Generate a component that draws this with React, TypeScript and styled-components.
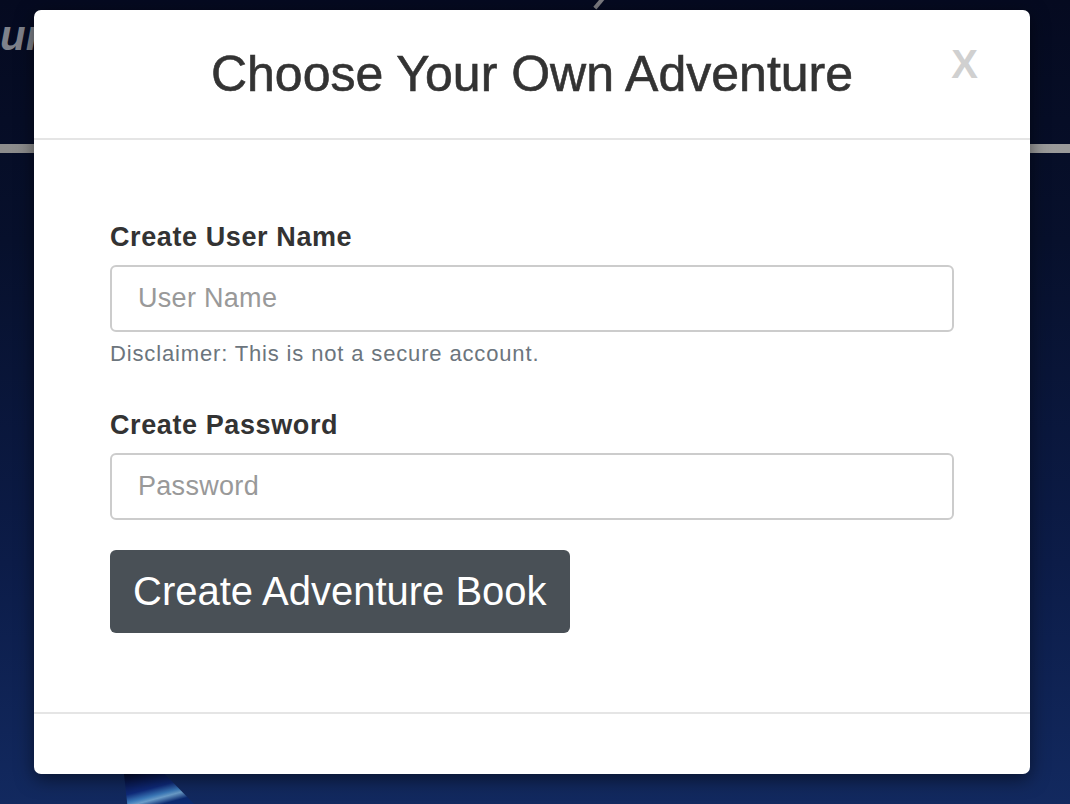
import React from 'react';
import styled, { createGlobalStyle } from 'styled-components';

const GlobalStyle = createGlobalStyle`
  html, body {
    margin: 0;
    padding: 0;
    height: 100%;
  }
  body {
    font-family: "Liberation Sans", Arial, Helvetica, sans-serif;
    color: #333;
  }
  #root {
    height: 100%;
  }
`;

export default function App() {
  return (
    <>
      <GlobalStyle />
      <Backdrop>
        <BrandText>Your</BrandText>
        <NavBar />
        <Quill />
        <Ribbon />
        <Modal>
          <ModalHeader>
            <ModalTitle>Choose Your Own Adventure</ModalTitle>
            <CloseButton type="button">X</CloseButton>
          </ModalHeader>
          <ModalBody>
            <Field>
              <Label htmlFor="username">Create User Name</Label>
              <Input id="username" type="text" placeholder="User Name" />
              <Hint>Disclaimer: This is not a secure account.</Hint>
            </Field>
            <Field>
              <Label htmlFor="password">Create Password</Label>
              <Input id="password" type="password" placeholder="Password" />
            </Field>
            <SubmitButton type="button">Create Adventure Book</SubmitButton>
          </ModalBody>
          <ModalFooter />
        </Modal>
      </Backdrop>
    </>
  );
}

const Backdrop = styled.div`
  position: relative;
  height: 804px;
  overflow: hidden;
  background: linear-gradient(180deg, #050a20 0%, #07102c 30%, #0c1c48 70%, #12295f 100%);
  display: flex;
  align-items: flex-start;
  padding: 10px 0 0 34px;
  box-sizing: border-box;
`;

const BrandText = styled.span`
  position: absolute;
  left: -52px;
  top: 12px;
  font-size: 42px;
  font-style: italic;
  font-weight: bold;
  color: #7f828b;
`;

const NavBar = styled.div`
  position: absolute;
  left: 0;
  right: 0;
  top: 144px;
  height: 9px;
  background: linear-gradient(90deg, #8c8c8c, #9a9a9a);
`;

const Quill = styled.div`
  position: absolute;
  left: 598px;
  top: -6px;
  width: 4px;
  height: 16px;
  background: #7b7b80;
  transform: rotate(40deg);
`;

const Ribbon = styled.div`
  position: absolute;
  left: 124px;
  top: 774px;
  width: 74px;
  height: 34px;
  background: linear-gradient(165deg, #050c30 0%, #0f2a7a 40%, #3a78b8 55%, #6a9cc8 62%, #0b2a70 75%);
  clip-path: polygon(0 0, 55% 0, 100% 100%, 5% 100%);
`;

const Modal = styled.div`
  position: relative;
  z-index: 1;
  width: 996px;
  height: 764px;
  background: #fff;
  border-radius: 7px;
  box-shadow: 0 5px 18px rgba(0, 0, 0, 0.5);
  display: flex;
  flex-direction: column;
`;

const ModalHeader = styled.div`
  position: relative;
  height: 128px;
  border-bottom: 2px solid #e5e5e5;
  display: flex;
  align-items: center;
  justify-content: center;
`;

const ModalTitle = styled.h1`
  margin: 0;
  font-size: 50px;
  font-weight: normal;
  -webkit-text-stroke: 0.6px #333;
  color: #333;
`;

const CloseButton = styled.button`
  position: absolute;
  right: 52px;
  top: 34px;
  border: none;
  background: none;
  padding: 0;
  font-family: "Liberation Sans", Arial, sans-serif;
  font-size: 40px;
  font-weight: bold;
  line-height: 1;
  color: #d0d0d0;
`;

const ModalBody = styled.div`
  flex: 1;
  padding: 82px 76px 0;
  display: flex;
  flex-direction: column;
  align-items: flex-start;
  border-bottom: 2px solid #e5e5e5;
`;

const Field = styled.div`
  width: 100%;
  margin-bottom: 30px;
`;

const Label = styled.label`
  display: block;
  font-size: 27px;
  font-weight: bold;
  letter-spacing: 0.6px;
  color: #333;
  margin-bottom: 12px;
`;

const Input = styled.input`
  display: block;
  width: 100%;
  height: 67px;
  box-sizing: border-box;
  padding: 0 26px;
  border: 2px solid #cccccc;
  border-radius: 6px;
  font-family: "Liberation Sans", Arial, sans-serif;
  font-size: 27px;
  letter-spacing: 0.3px;
  color: #333;
  &::placeholder {
    color: #999;
  }
`;

const Hint = styled.div`
  margin: 9px 0 13px;
  font-size: 22px;
  letter-spacing: 0.85px;
  color: #6c757d;
`;

const SubmitButton = styled.button`
  height: 83px;
  padding: 0 23px;
  border: none;
  border-radius: 6px;
  background: #495056;
  color: #fff;
  font-family: "Liberation Sans", Arial, sans-serif;
  font-size: 40px;
`;

const ModalFooter = styled.div`
  height: 60px;
`;
